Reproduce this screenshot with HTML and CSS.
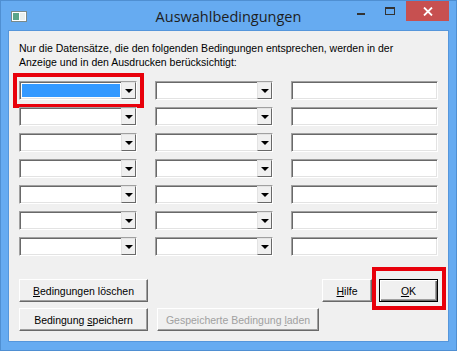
FILE: index.html
```html
<!DOCTYPE html>
<html lang="de">

<head>
    <meta charset="UTF-8">
    <title>Auswahlbedingungen</title>
    <link rel="stylesheet" href="styles.css">
</head>

<body>
    <div class="window">
        <div class="titlebar">
            <svg class="app-icon" width="16" height="11" viewBox="0 0 16 11">
                <rect x="0.5" y="0.5" width="15" height="10" fill="#fff" stroke="#7a8a8a"/>
                <rect x="2" y="2" width="6" height="7" fill="#5aa58a"/>
                <rect x="9" y="2" width="5" height="7" fill="#e8efef"/>
            </svg>
            <span class="title">Auswahlbedingungen</span>
            <div class="controls">
                <span class="ctl ctl-min"></span>
                <span class="ctl ctl-max"></span>
                <span class="ctl ctl-close">
                    <svg width="10" height="9" viewBox="0 0 10 9">
                        <path d="M1 0.5 L9 8.5 M9 0.5 L1 8.5" stroke="#fff" stroke-width="1.8"/>
                    </svg>
                </span>
            </div>
        </div>

        <div class="client">
            <p class="intro">Nur die Datensätze, die den folgenden Bedingungen entsprechen, werden in der<br>Anzeige und in den Ausdrucken berücksichtigt:</p>

            <div class="conditions">
                <div class="combo marked"><span class="field selected"></span><span class="drop"></span><span class="highlight hl-combo"></span></div>
                <div class="combo"><span class="field"></span><span class="drop"></span></div>
                <div class="textbox"></div>

                <div class="combo"><span class="field"></span><span class="drop"></span></div>
                <div class="combo"><span class="field"></span><span class="drop"></span></div>
                <div class="textbox"></div>

                <div class="combo"><span class="field"></span><span class="drop"></span></div>
                <div class="combo"><span class="field"></span><span class="drop"></span></div>
                <div class="textbox"></div>

                <div class="combo"><span class="field"></span><span class="drop"></span></div>
                <div class="combo"><span class="field"></span><span class="drop"></span></div>
                <div class="textbox"></div>

                <div class="combo"><span class="field"></span><span class="drop"></span></div>
                <div class="combo"><span class="field"></span><span class="drop"></span></div>
                <div class="textbox"></div>

                <div class="combo"><span class="field"></span><span class="drop"></span></div>
                <div class="combo"><span class="field"></span><span class="drop"></span></div>
                <div class="textbox"></div>

                <div class="combo"><span class="field"></span><span class="drop"></span></div>
                <div class="combo"><span class="field"></span><span class="drop"></span></div>
                <div class="textbox"></div>
            </div>

            <div class="button-row">
                <button class="btn btn-wide"><u>B</u>edingungen löschen</button>
                <div class="right-buttons">
                    <button class="btn btn-help"><u>H</u>ilfe</button>
                    <button class="btn btn-ok default"><u>O</u>K<span class="highlight hl-ok"></span></button>
                </div>
            </div>
            <div class="button-row second">
                <button class="btn btn-wide">Bedingung <u>s</u>peichern</button>
                <button class="btn btn-load" disabled>Gespeicherte Bedingung <u>l</u>aden</button>
            </div>
        </div>
    </div>
</body>

</html>
```

FILE: styles.css
```css
:root {
    --frame-color: #66abf1;
    --face-color: #f0f0f0;
    --shadow-dark: #696969;
    --shadow-mid: #a0a0a0;
    --mark-color: #e8000b;
}

body {
    margin: 0;
    font-family: 'Liberation Sans', Arial, sans-serif;
    font-size: 10.5px;
    color: #000;
}

.window {
    width: 457px;
    height: 351px;
    box-sizing: border-box;
    background-color: var(--frame-color);
    border: 1px solid #4f8fd2;
    padding: 0 7px 8px 7px;
    display: flex;
    flex-direction: column;
}

.titlebar {
    height: 29px;
    display: flex;
    align-items: center;
    position: relative;
}

.app-icon {
    margin: 1px 0 0 3px;
}

.title {
    position: absolute;
    left: 0;
    right: 0;
    top: 6px;
    text-align: center;
    font-family: 'Open Sans', 'Noto Sans', sans-serif;
    font-size: 14.5px;
    color: #1e1e1e;
}

.controls {
    margin-left: auto;
    align-self: flex-start;
    display: flex;
    position: relative;
    z-index: 1;
}

.ctl {
    display: flex;
    align-items: center;
    justify-content: center;
    height: 20px;
}

.ctl-min {
    width: 26px;
}

.ctl-min::after {
    content: "";
    width: 8px;
    height: 2px;
    background: #333;
    margin-top: 6px;
}

.ctl-max {
    width: 32px;
}

.ctl-max::after {
    content: "";
    width: 8px;
    height: 5px;
    border: 1px solid #333;
    border-top-width: 2px;
}

.ctl-close {
    width: 43px;
    background-color: #c75050;
}

.client {
    flex: 1;
    background-color: var(--face-color);
    border: 1px solid #5596db;
    padding: 10px 10px 0 10px;
}

.intro {
    margin: 0 0 12px 0;
    line-height: 14px;
}

.conditions {
    display: grid;
    grid-template-columns: 118px 118px 147px;
    grid-auto-rows: 19px;
    column-gap: 18px;
    row-gap: 7px;
}

.combo,
.textbox {
    position: relative;
    box-sizing: border-box;
    background: #fff;
    border: 1px solid;
    border-color: var(--shadow-mid) #fff #fff var(--shadow-mid);
    box-shadow: inset 1px 1px var(--shadow-dark), inset -1px -1px #e3e3e3;
}

.combo {
    display: flex;
    padding: 2px;
}

.field {
    flex: 1;
}

.field.selected {
    background-color: #3399ff;
    margin-right: 1px;
}

.drop {
    width: 15px;
    background: var(--face-color);
    border-left: 1px solid #e3e3e3;
    border-top: 1px solid #e3e3e3;
    border-right: 1px solid var(--shadow-dark);
    border-bottom: 1px solid var(--shadow-dark);
    margin: -2px -2px -2px 0;
    box-sizing: border-box;
    display: flex;
    align-items: center;
    justify-content: center;
}

.drop::after {
    content: "";
    border-left: 4px solid transparent;
    border-right: 4px solid transparent;
    border-top: 4px solid #000;
    margin-top: 1px;
}

.highlight {
    position: absolute;
    border: 4px solid var(--mark-color);
    pointer-events: none;
}

.hl-combo {
    left: -7px;
    right: -8px;
    top: -9px;
    bottom: -9px;
}

.button-row {
    display: flex;
    align-items: center;
    margin-top: 23px;
}

.button-row.second {
    margin-top: 6px;
    gap: 9px;
}

.right-buttons {
    margin-left: auto;
    display: flex;
    gap: 7px;
}

.btn {
    position: relative;
    height: 23px;
    box-sizing: border-box;
    font-family: inherit;
    font-size: 10.5px;
    color: #000;
    background-color: var(--face-color);
    border: 1px solid;
    border-color: #fff var(--shadow-dark) var(--shadow-dark) #fff;
    box-shadow: inset -1px -1px var(--shadow-mid);
    padding: 0;
    border-radius: 0;
}

.btn-wide {
    width: 129px;
}

.btn-load {
    width: 162px;
    color: #a0a0a0;
}

.btn-help {
    width: 50px;
}

.btn-ok {
    width: 59px;
}

.btn.default {
    border-color: #000;
    box-shadow: inset 1px 1px #fff, inset -1px -1px var(--shadow-dark), inset -2px -2px var(--shadow-mid);
}

.hl-ok {
    left: -8px;
    right: -9px;
    top: -13px;
    bottom: -9px;
}
```
